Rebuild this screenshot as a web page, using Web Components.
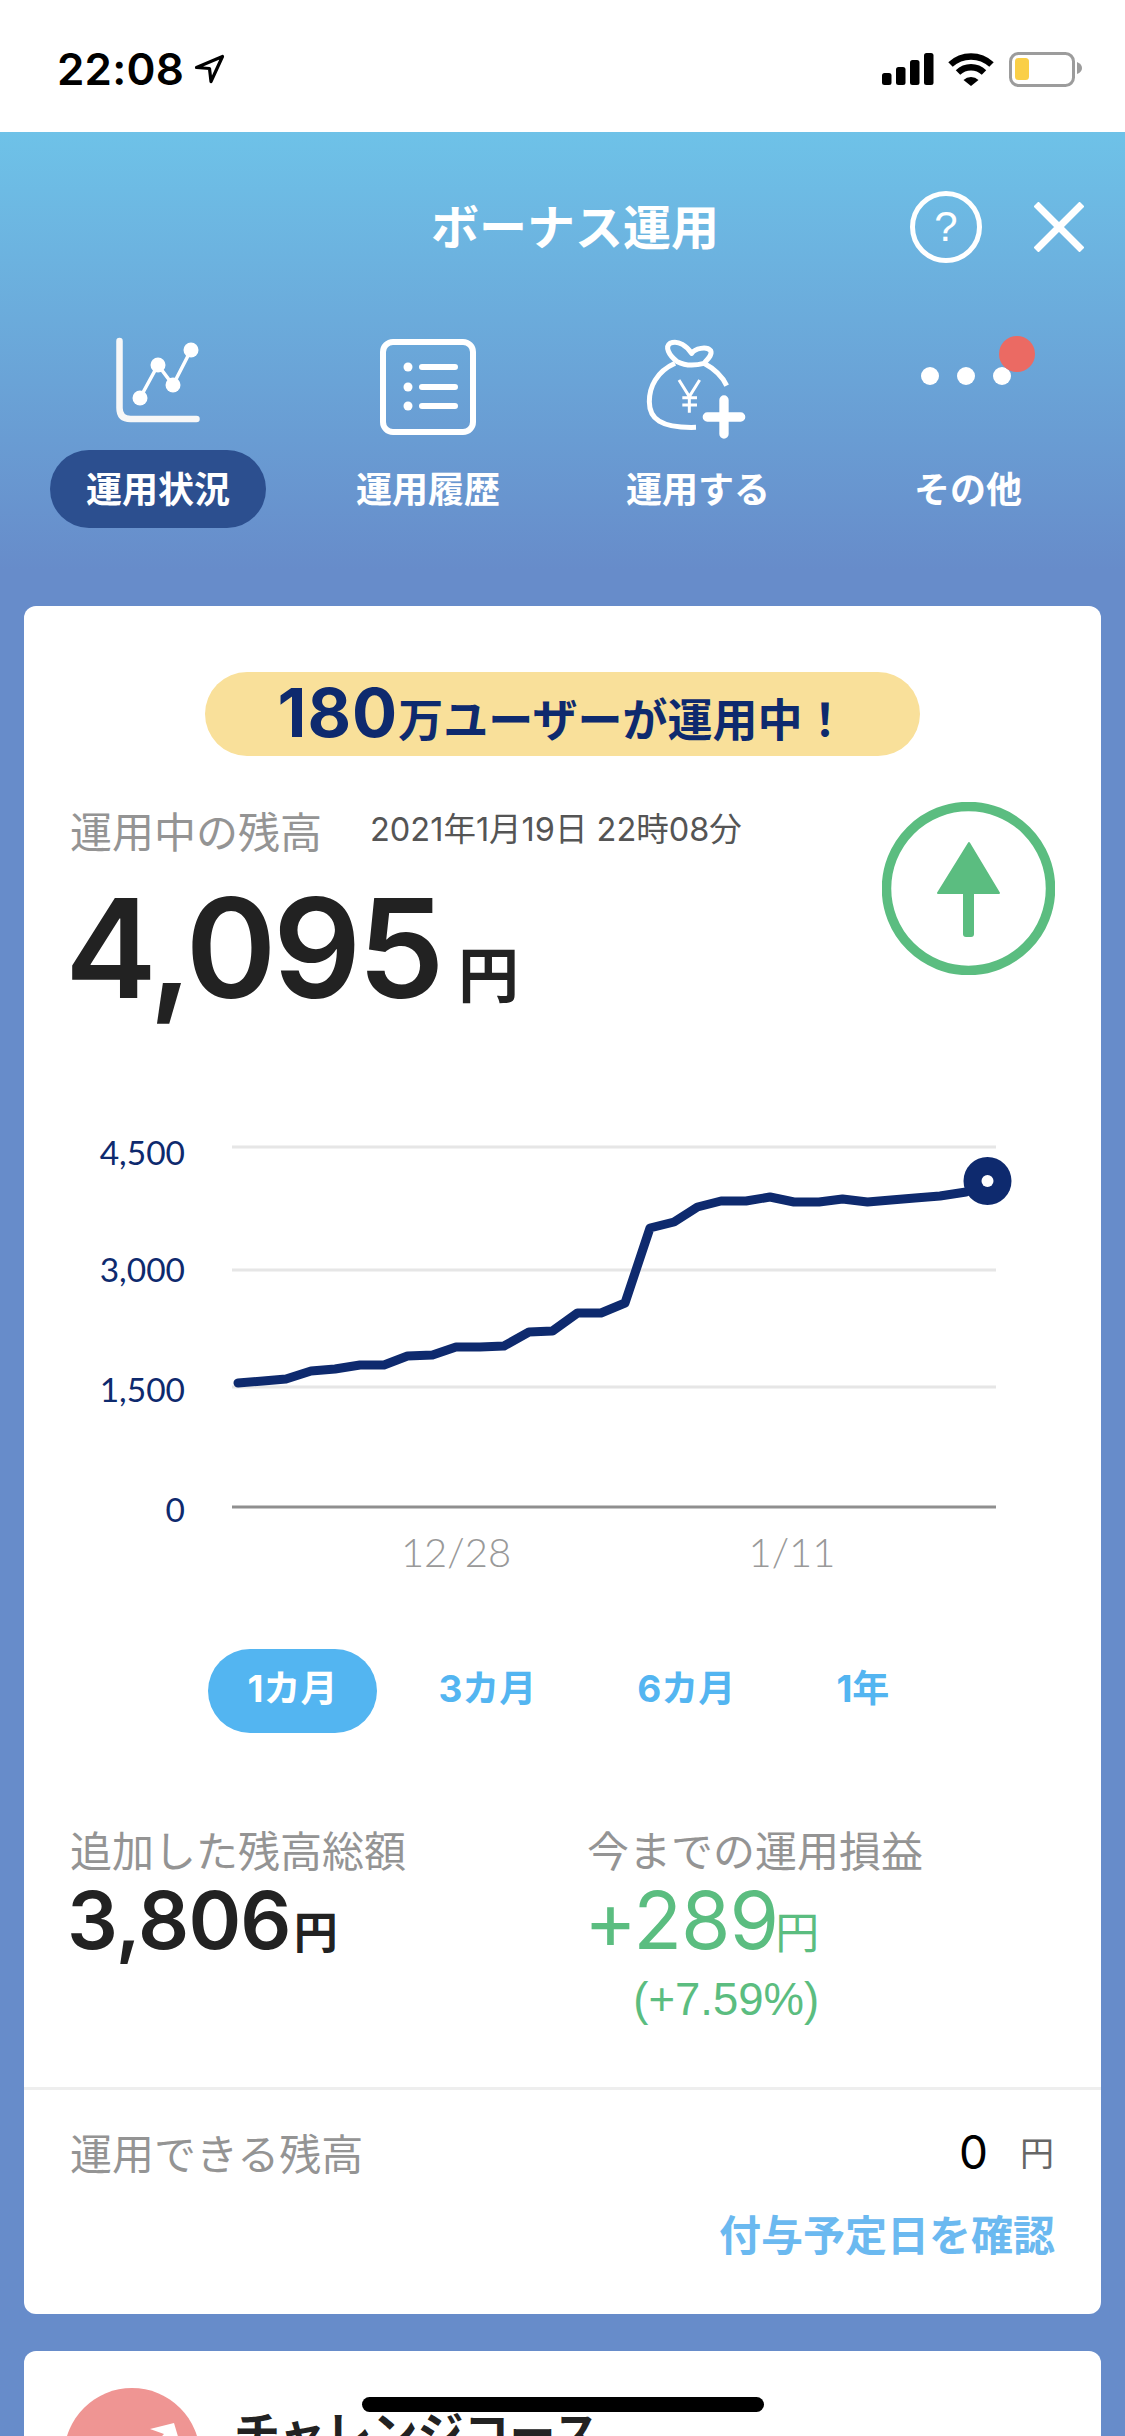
<!DOCTYPE html>
<html lang="ja">
<head>
<meta charset="utf-8">
<title>ボーナス運用</title>
<style>
  html, body { margin: 0; padding: 0; }
  body {
    width: 1125px;
    height: 2436px;
    overflow: hidden;
    position: relative;
    background: #678cca;
    font-family: "Noto Sans CJK JP", sans-serif;
    color: #222;
  }
  svg { display: block; overflow: visible; }
</style>
</head>
<body>
  <status-bar></status-bar>

  <app-header title="ボーナス運用">
    <nav-tab label="運用状況" active>
      <svg width="120" height="100" viewBox="98 337 120 100" fill="none" stroke="#f7f7f7">
        <path d="M119.5 341v67q0 11 11 11h66" stroke-width="6.5" stroke-linecap="round"/>
        <path d="M140 398l18-33 15 20 18-35" stroke="#fff" stroke-width="3.5"/>
        <g fill="#fff" stroke="none">
          <circle cx="140" cy="398" r="7.5"/><circle cx="158" cy="365" r="7.5"/>
          <circle cx="173" cy="385" r="7.5"/><circle cx="191" cy="350" r="7.5"/>
        </g>
      </svg>
    </nav-tab>
    <nav-tab label="運用履歴">
      <svg width="120" height="100" viewBox="368 337 120 100" fill="none" stroke="#fff" stroke-linecap="round">
        <rect x="383" y="342" width="90" height="90" rx="10" stroke-width="6"/>
        <path d="M422 367h33M422 387h33M422 406h33" stroke-width="6"/>
        <g fill="#fff" stroke="none">
          <circle cx="408" cy="367" r="4.5"/><circle cx="408" cy="387" r="4.5"/><circle cx="408" cy="406" r="4.5"/>
        </g>
      </svg>
    </nav-tab>
    <nav-tab label="運用する">
      <svg width="120" height="100" viewBox="638 337 120 100" fill="none" stroke="#fff">
        <g transform="translate(600 300) scale(.3333)">
          <path d="M232 185C205 165 195 140 210 130C235 118 262 140 275 160C285 145 320 138 332 152C338 165 322 178 312 190C285 197 255 197 232 185Z" stroke-width="15" stroke-linejoin="round"/>
          <path d="M225 190C170 215 148 260 148 305C148 355 180 385 288 382M312 190C340 205 365 225 380 257" stroke-width="15"/>
          <path d="M237 240L268 290L299 240M268 290V338M247 293H291M247 315H291" stroke-width="9"/>
          <path d="M322 351H422M372 300V402" stroke-width="28" stroke-linecap="round"/>
        </g>
      </svg>
    </nav-tab>
    <nav-tab label="その他">
      <svg width="120" height="100" viewBox="908 337 120 100" fill="#fff">
        <circle cx="930" cy="376" r="9"/><circle cx="966" cy="376" r="9"/><circle cx="1002" cy="376" r="9"/>
        <circle cx="1017" cy="354" r="18" fill="#eb6a63"/>
      </svg>
    </nav-tab>
  </app-header>

  <main-column>
    <info-card>
      <promo-badge><b>180</b>万ユーザーが運用中！</promo-badge>
      <balance-head date="2021年1月19日 22時08分" amount="4,095"></balance-head>
      <trend-chart></trend-chart>
      <period-tabs>
        <period-tab active>1カ月</period-tab>
        <period-tab>3カ月</period-tab>
        <period-tab>6カ月</period-tab>
        <period-tab>1年</period-tab>
      </period-tabs>
      <stat-grid>
        <stat-block label="追加した残高総額" value="3,806"></stat-block>
        <stat-block label="今までの運用損益" value="+289" note="(+7.59%)" tone="gain"></stat-block>
      </stat-grid>
      <card-foot label="運用できる残高" value="0" link="付与予定日を確認"></card-foot>
    </info-card>
    <info-card>
      <course-row>チャレンジコース</course-row>
    </info-card>
  </main-column>

  <home-indicator></home-indicator>

<script>
// small base: every element here only differs by its css and markup
class Part extends HTMLElement {
  constructor() {
    super();
    this.attachShadow({ mode: "open" });
  }

  connectedCallback() {
    this.shadowRoot.innerHTML = `<style>${this.constructor.styles}</style>${this.markup()}`;
  }

  markup() {
    return "<slot></slot>";
  }
}

class StatusBar extends Part {
  static get styles() {
    return /* css */`
      :host {
        display: flex;
        justify-content: space-between;
        height: 132px;
        background: #fff;
        color: #000;
        box-sizing: border-box;
        padding: 0 43px 0 57px;
      }
      .left { display: flex; align-items: center; gap: 11px; height: 138px; }
      .time { font: 600 44px/1 Inter, sans-serif; letter-spacing: .2px; }
      svg { display: block; overflow: visible; }
    `;
  }

  markup() {
    return /* html */`
      <div class="left">
        <span class="time">22:08</span>
        <svg width="29" height="28" viewBox="0 0 29 28" fill="none" stroke="#000" stroke-width="3.2" stroke-linejoin="round">
          <path d="M1.5 12.5L27.5 1.5L16 26.5L14.5 13.5Z"/>
        </svg>
      </div>
      <svg width="200" height="132" viewBox="882 0 200 132">
        <g fill="#000">
          <rect x="882" y="73" width="9.5" height="12" rx="2.5"/>
          <rect x="896" y="67" width="9.5" height="18" rx="2.5"/>
          <rect x="910" y="60" width="9.5" height="25" rx="2.5"/>
          <rect x="924" y="53" width="9.5" height="32" rx="2.5"/>
        </g>
        <g fill="none" stroke="#000" stroke-width="6.5">
          <path d="M950.5 64.5a30 30 0 0 1 41 0"/>
          <path d="M958 72.500a19 19 0 0 1 26 0"/>
        </g>
        <path d="M963.500 80a11 11 0 0 1 15 0L971 86Z" fill="#000"/>
        <rect x="1010.500" y="53.500" width="63" height="32" rx="8" fill="none" stroke="#9c9c9c" stroke-width="3"/>
        <rect x="1015" y="58" width="14" height="22" rx="3.500" fill="#facf47"/>
        <path d="M1077 62q5 2 5 6t-5 6Z" fill="#9c9c9c"/>
      </svg>
    `;
  }
}

class AppHeader extends Part {
  static get styles() {
    return /* css */`
      :host {
        display: block;
        height: 438px;
        box-sizing: border-box;
        padding-top: 59px;
        background: linear-gradient(#6ec2e8, #678cca);
        color: #fff;
      }
      .top {
        display: flex;
        align-items: center;
        height: 72px;
        padding: 0 41px 0 240px;
      }
      h1 {
        flex: 1;
        margin: 0;
        text-align: center;
        font: 700 48px/66px "Noto Sans CJK JP", sans-serif;
        height: 72px;
      }
      .help {
        width: 72px;
        height: 72px;
        box-sizing: border-box;
        border: 5px solid #fff;
        border-radius: 50%;
        margin-right: 52px;
        display: grid;
        place-items: center;
        font: 400 42px/1 "Liberation Sans", sans-serif;
      }
      nav {
        display: grid;
        grid-template-columns: repeat(4, 270px);
        padding-left: 23px;
        margin-top: 74px;
      }
    `;
  }

  markup() {
    return /* html */`
      <div class="top">
        <h1>${this.getAttribute("title")}</h1>
        <span class="help">?</span>
        <svg width="50" height="50" viewBox="0 0 50 50" stroke="#fff" stroke-width="7" style="display:block">
          <path d="M2 2L48 48M48 2L2 48"/>
        </svg>
      </div>
      <nav><slot></slot></nav>
    `;
  }
}

class NavTab extends Part {
  static get styles() {
    return /* css */`
      :host {
        display: flex;
        flex-direction: column;
        align-items: center;
        gap: 13px;
      }
      .icon { height: 100px; }
      .label {
        height: 78px;
        padding: 0 36px;
        border-radius: 39px;
        font: 700 36px/75px "Noto Sans CJK JP", sans-serif;
      }
      :host([active]) .label { background: #2c4f8f; }
    `;
  }

  markup() {
    return /* html */`
      <div class="icon"><slot></slot></div>
      <div class="label">${this.getAttribute("label")}</div>
    `;
  }
}

class MainColumn extends Part {
  static get styles() {
    return /* css */`
      :host {
        display: flex;
        flex-direction: column;
        gap: 37px;
        padding: 36px 24px 0;
      }
    `;
  }
}

class InfoCard extends Part {
  static get styles() {
    return /* css */`
      :host {
        display: block;
        background: #fff;
        border-radius: 12px;
      }
    `;
  }
}

class PromoBadge extends Part {
  static get styles() {
    return /* css */`
      :host {
        display: block;
        width: 715px;
        height: 84px;
        margin: 66px auto 0;
        background: #f9e09a;
        border-radius: 42px;
        text-align: center;
        color: #0e2a6e;
        font: 700 45px/82px "Noto Sans CJK JP", sans-serif;
      }
      ::slotted(b) { font: 700 67px/82px Inter, sans-serif; letter-spacing: 1px; }
    `;
  }
}

class BalanceHead extends Part {
  static get styles() {
    return /* css */`
      :host {
        display: flex;
        justify-content: space-between;
        padding: 46px 46px 0;
        height: 344px;
        box-sizing: border-box;
      }
      .line { display: flex; align-items: center; height: 56px; }
      .label { font: 400 42px/56px "Noto Sans CJK JP", sans-serif; color: #949494; }
      .date {
        margin-left: 48px;
        font: 400 32.500px/56px Inter, "Noto Sans CJK JP", sans-serif;
        color: #555;
      }
      .total { display: flex; align-items: baseline; margin-top: 19px; margin-left: -5px; }
      .amount { font: 600 138px/142px Inter, sans-serif; letter-spacing: -3.500px; color: #222; }
      .yen { margin-left: 17px; font: 700 61px/1 "Noto Sans CJK JP", sans-serif; color: #222; }
      svg { display: block; flex: none; }
    `;
  }

  markup() {
    return /* html */`
      <div>
        <div class="line">
          <span class="label">運用中の残高</span>
          <span class="date">${this.getAttribute("date")}</span>
        </div>
        <div class="total">
          <span class="amount">${this.getAttribute("amount")}</span><span class="yen">円</span>
        </div>
      </div>
      <svg width="173" height="173" viewBox="882 802 173 173">
        <circle cx="968.500" cy="888.500" r="82" fill="none" stroke="#5bbd80" stroke-width="9.500"/>
        <path d="M969 843L999 893H938Z" fill="#5bbd80" stroke="#5bbd80" stroke-width="2" stroke-linejoin="round"/>
        <rect x="963" y="890" width="11" height="47" rx="3" fill="#5bbd80"/>
      </svg>
    `;
  }
}

class TrendChart extends Part {
  static get styles() {
    return /* css */`
      :host { display: block; height: 500px; }
      svg { display: block; overflow: visible; }
      text { font-family: Lato, "Liberation Sans", sans-serif; }
      .y { font-size: 33.500px; fill: #0e2a6e; text-anchor: end; }
      .x { font-size: 40px; fill: #999; font-weight: 300; text-anchor: middle; }
    `;
  }

  markup() {
    const points = [
      [238, 1383], [263, 1381], [286, 1379], [311, 1371], [335, 1369], [360, 1365], [384, 1365], [407.5, 1356],
      [432.5, 1355], [456, 1347], [480, 1347], [504, 1346], [529, 1332], [552.5, 1331], [577.5, 1313], [601, 1313],
      [625, 1303], [650, 1228], [674, 1222], [697.5, 1207], [721, 1201], [746, 1201], [770, 1197], [794, 1202],
      [819, 1202], [842.5, 1199], [867.5, 1202], [891, 1200], [915, 1198], [940, 1196], [966, 1192]
    ];
    const grid = [1147, 1270, 1387].map(y => `<path d="M232 ${y}H996" stroke="#e6e6e6" stroke-width="3"/>`).join("");

    return /* html */`
      <svg width="1077" height="500" viewBox="24 1100 1077 500">
        ${grid}
        <path d="M232 1507H996" stroke="#8f8f8f" stroke-width="3"/>
        <text class="y" x="185" y="1165">4,500</text>
        <text class="y" x="185" y="1282">3,000</text>
        <text class="y" x="185" y="1402">1,500</text>
        <text class="y" x="185" y="1522">0</text>
        <text class="x" x="456" y="1567">12/28</text>
        <text class="x" x="792" y="1567">1/11</text>
        <polyline points="${points.join(" ")}" fill="none" stroke="#0e2a6e" stroke-width="9" stroke-linecap="round" stroke-linejoin="round"/>
        <circle cx="987.500" cy="1181" r="24" fill="#0e2a6e"/>
        <circle cx="987.500" cy="1181" r="6" fill="#fff"/>
      </svg>
    `;
  }
}

class PeriodTabs extends Part {
  static get styles() {
    return /* css */`
      :host {
        display: flex;
        gap: 22px;
        margin-top: 49px;
        padding-left: 184px;
      }
    `;
  }
}

class PeriodTab extends Part {
  static get styles() {
    return /* css */`
      :host {
        display: block;
        height: 84px;
        padding: 0 39.500px;
        border-radius: 42px;
        color: #53b5f1;
        font: 700 37px/80px Inter, "Noto Sans CJK JP", sans-serif;
      }
      :host([active]) { background: #53b5f1; color: #fff; }
    `;
  }
}

class StatGrid extends Part {
  static get styles() {
    return /* css */`
      :host {
        display: grid;
        grid-template-columns: 517px 1fr;
        padding-left: 46px;
        margin-top: 88px;
      }
    `;
  }
}

class StatBlock extends Part {
  static get styles() {
    return /* css */`
      :host { display: block; color: #222; }
      :host([tone="gain"]) { color: #5bbd80; }
      .label { font: 400 42px/56px "Noto Sans CJK JP", sans-serif; color: #949494; }
      .body { display: inline-flex; flex-direction: column; align-items: flex-end; margin-top: -2px; margin-left: -3px; }
      .value { display: flex; align-items: baseline; }
      .num { font: 600 80px/90px Inter, sans-serif; letter-spacing: -.8px; }
      .yen { margin-left: 3px; font: 700 44px/1 "Noto Sans CJK JP", sans-serif; }
      :host([tone="gain"]) .num { font-weight: 400; letter-spacing: -1px; }
      :host([tone="gain"]) .yen { font-weight: 400; margin-left: -3px; }
      .note { margin-top: 7px; font: 400 45.500px/56px "Liberation Sans", sans-serif; }
    `;
  }

  markup() {
    const note = this.getAttribute("note");
    return /* html */`
      <div class="label">${this.getAttribute("label")}</div>
      <div class="body">
        <div class="value"><span class="num">${this.getAttribute("value")}</span><span class="yen">円</span></div>
        ${note ? `<div class="note">${note}</div>` : ""}
      </div>
    `;
  }
}

class CardFoot extends Part {
  static get styles() {
    return /* css */`
      :host {
        display: block;
        margin-top: 59px;
        border-top: 3px solid #eee;
        padding: 34px 47px 53px 46px;
      }
      .row { display: flex; align-items: center; height: 56px; }
      .label { flex: 1; font: 400 42px/56px "Noto Sans CJK JP", sans-serif; color: #949494; }
      .zero { font: 400 46px/56px Inter, sans-serif; color: #000; margin-right: 32px; }
      .yen { font: 400 34px/56px "Noto Sans CJK JP", sans-serif; color: #666; }
      .link {
        margin-top: 25px;
        text-align: right;
        margin-right: -1px;
        font: 700 42px/56px "Noto Sans CJK JP", sans-serif;
        color: #6bb9f0;
      }
    `;
  }

  markup() {
    return /* html */`
      <div class="row">
        <span class="label">${this.getAttribute("label")}</span>
        <span class="zero">${this.getAttribute("value")}</span>
        <span class="yen">円</span>
      </div>
      <div class="link">${this.getAttribute("link")}</div>
    `;
  }
}

class CourseRow extends Part {
  static get styles() {
    return /* css */`
      :host {
        display: flex;
        align-items: flex-start;
        gap: 34px;
        height: 200px;
        padding: 37px 40px 0;
      }
      svg { display: block; flex: none; }
      .name { margin-top: 12px; font: 700 46px/60px "Noto Sans CJK JP", sans-serif; color: #222; }
    `;
  }

  markup() {
    return /* html */`
      <svg width="136" height="136" viewBox="63 2388 136 136">
        <circle cx="131" cy="2456" r="68" fill="#ef9593"/>
        <path d="M149 2429L173 2423L181 2450L172 2445L150 2470L140 2458L163 2434Z" fill="#fff"/>
      </svg>
      <div class="name"><slot></slot></div>
    `;
  }
}

class HomeIndicator extends Part {
  static get styles() {
    return /* css */`
      :host {
        position: absolute;
        left: 362px;
        top: 2397px;
        width: 402px;
        height: 15px;
        background: #000;
        border-radius: 8px;
      }
    `;
  }

  markup() {
    return "";
  }
}

customElements.define("status-bar", StatusBar);
customElements.define("app-header", AppHeader);
customElements.define("nav-tab", NavTab);
customElements.define("main-column", MainColumn);
customElements.define("info-card", InfoCard);
customElements.define("promo-badge", PromoBadge);
customElements.define("balance-head", BalanceHead);
customElements.define("trend-chart", TrendChart);
customElements.define("period-tabs", PeriodTabs);
customElements.define("period-tab", PeriodTab);
customElements.define("stat-grid", StatGrid);
customElements.define("stat-block", StatBlock);
customElements.define("card-foot", CardFoot);
customElements.define("course-row", CourseRow);
customElements.define("home-indicator", HomeIndicator);
</script>
</body>
</html>
